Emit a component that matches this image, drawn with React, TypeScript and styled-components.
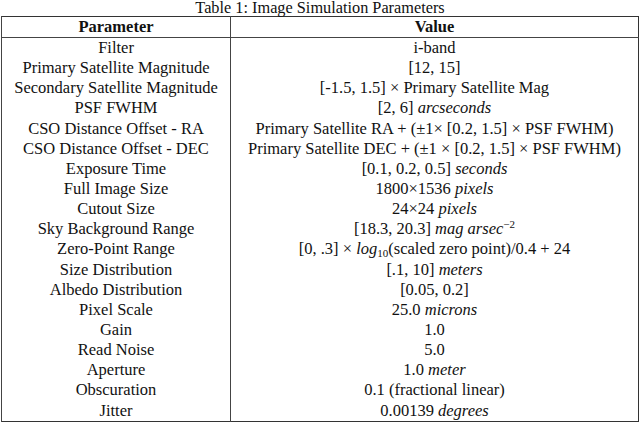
import React from "react";
import styled, { createGlobalStyle } from "styled-components";

const Global = createGlobalStyle`
  html, body { margin: 0; padding: 0; background: #fff; }
  body { font-family: "Liberation Serif", "Times New Roman", serif; color: #111; }
`;

const Page = styled.div`
  width: 640px;
  height: 423px;
  overflow: hidden;
  background: #fff;
`;

const Caption = styled.div`
  height: 16px;
  line-height: 16px;
  text-align: center;
  font-size: 16.3px;
  color: #111;
`;

const Table = styled.table`
  margin-left: 1px;
  width: 638px;
  border-collapse: collapse;
  table-layout: fixed;
  border: 1.5px solid #333;
  font-size: 16.5px;
`;

const HeadCell = styled.th<{ $w?: number }>`
  height: 20px;
  padding: 0;
  font-weight: bold;
  text-align: center;
  line-height: 18px;
  border-left: 1.2px solid #444;
  border-bottom: 1.5px solid #444;
  ${(p) => (p.$w ? `width: ${p.$w}px;` : "")}
`;

const Cell = styled.td`
  height: 20.15px;
  padding: 0;
  text-align: center;
  line-height: 18px;
  white-space: nowrap;
  border-left: 1.2px solid #444;
`;

const Unit = styled.i`
  font-style: italic;
`;

const Sub = styled.sub`
  font-size: 11px;
  vertical-align: -3px;
  line-height: 0;
`;

const Sup = styled.sup`
  font-size: 11px;
  vertical-align: 6px;
  line-height: 0;
`;

type Row = { name: string; value: React.ReactNode };

const rows: Row[] = [
  { name: "Filter", value: "i-band" },
  { name: "Primary Satellite Magnitude", value: "[12, 15]" },
  { name: "Secondary Satellite Magnitude", value: "[-1.5, 1.5] × Primary Satellite Mag" },
  { name: "PSF FWHM", value: <>[2, 6] <Unit>arcseconds</Unit></> },
  { name: "CSO Distance Offset - RA", value: "Primary Satellite RA + (±1× [0.2, 1.5] × PSF FWHM)" },
  { name: "CSO Distance Offset - DEC", value: "Primary Satellite DEC + (±1 × [0.2, 1.5] × PSF FWHM)" },
  { name: "Exposure Time", value: <>[0.1, 0.2, 0.5] <Unit>seconds</Unit></> },
  { name: "Full Image Size", value: <>1800×1536 <Unit>pixels</Unit></> },
  { name: "Cutout Size", value: <>24×24 <Unit>pixels</Unit></> },
  { name: "Sky Background Range", value: <>[18.3, 20.3] <Unit>mag arsec</Unit><Sup>−2</Sup></> },
  {
    name: "Zero-Point Range",
    value: <>[0, .3] × <Unit>log</Unit><Sub>10</Sub>(scaled zero point)/0.4 + 24</>,
  },
  { name: "Size Distribution", value: <>[.1, 10] <Unit>meters</Unit></> },
  { name: "Albedo Distribution", value: "[0.05, 0.2]" },
  { name: "Pixel Scale", value: <>25.0 <Unit>microns</Unit></> },
  { name: "Gain", value: "1.0" },
  { name: "Read Noise", value: "5.0" },
  { name: "Aperture", value: <>1.0 <Unit>meter</Unit></> },
  { name: "Obscuration", value: "0.1 (fractional linear)" },
  { name: "Jitter", value: <>0.00139 <Unit>degrees</Unit></> },
];

export default function App() {
  return (
    <Page>
      <Global />
      <Caption>Table 1: Image Simulation Parameters</Caption>
      <Table>
        <thead>
          <tr>
            <HeadCell $w={228}>Parameter</HeadCell>
            <HeadCell>Value</HeadCell>
          </tr>
        </thead>
        <tbody>
          {rows.map((r) => (
            <tr key={r.name}>
              <Cell>{r.name}</Cell>
              <Cell>{r.value}</Cell>
            </tr>
          ))}
        </tbody>
      </Table>
    </Page>
  );
}
